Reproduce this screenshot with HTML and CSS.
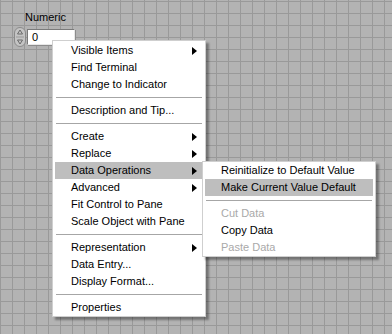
FILE: index.html
```html
<!DOCTYPE html>
<html lang="en">
<head>
    <meta charset="UTF-8">
    <title>Numeric - Data Operations</title>
    <link rel="stylesheet" href="styles.css">
</head>
<body>
    <div class="canvas">
        <!-- Numeric control on the front panel -->
        <div class="numeric">
            <div class="label">Numeric</div>
            <div class="control">
                <svg class="spin" width="12" height="20" viewBox="0 0 12 20">
                    <rect x="0.5" y="0.5" width="11" height="19" rx="5.5" fill="#c4c4c4" stroke="#8a8a8a"/>
                    <line x1="2" y1="10" x2="10" y2="10" stroke="#9a9a9a"/>
                    <path d="M6 3 L8.5 7 L3.5 7 Z" fill="none" stroke="#6a6a6a"/>
                    <path d="M6 17 L8.5 13 L3.5 13 Z" fill="none" stroke="#6a6a6a"/>
                </svg>
                <div class="display">0</div>
            </div>
        </div>

        <!-- Shortcut menu -->
        <ul class="menu main-menu">
            <li class="item">Visible Items<span class="arrow"></span></li>
            <li class="item">Find Terminal</li>
            <li class="item">Change to Indicator</li>
            <li class="sep"></li>
            <li class="item">Description and Tip...</li>
            <li class="sep"></li>
            <li class="item">Create<span class="arrow"></span></li>
            <li class="item">Replace<span class="arrow"></span></li>
            <li class="item active">Data Operations<span class="arrow"></span></li>
            <li class="item">Advanced<span class="arrow"></span></li>
            <li class="item">Fit Control to Pane</li>
            <li class="item">Scale Object with Pane</li>
            <li class="sep"></li>
            <li class="item">Representation<span class="arrow"></span></li>
            <li class="item">Data Entry...</li>
            <li class="item">Display Format...</li>
            <li class="sep"></li>
            <li class="item">Properties</li>
        </ul>

        <!-- Submenu Data Operations -->
        <ul class="menu sub-menu">
            <li class="item">Reinitialize to Default Value</li>
            <li class="item active">Make Current Value Default</li>
            <li class="sep"></li>
            <li class="item disabled">Cut Data</li>
            <li class="item">Copy Data</li>
            <li class="item disabled">Paste Data</li>
        </ul>
    </div>
</body>
</html>
```

FILE: styles.css
```css
* {
    margin: 0;
    padding: 0;
    box-sizing: border-box;
}

body, html {
    width: 100%;
    height: 100%;
    font-family: "Liberation Sans", Arial, sans-serif;
    font-size: 11px;
    color: #000;
}

/* Grid panel */
.canvas {
    position: relative;
    width: 392px;
    height: 334px;
    overflow: hidden;
    background-color: #b3b3b3;
    background-image:
        linear-gradient(to right, #999999 1px, transparent 1px),
        linear-gradient(to bottom, #999999 1px, transparent 1px);
    background-size: 12px 12px;
    background-position: 0 0, 0 1px;
}

/* Numeric control */
.numeric {
    position: absolute;
    left: 14px;
    top: 10px;
}

.label {
    margin-left: 11px;
    line-height: 14px;
    height: 17px;
}

.control {
    display: flex;
    align-items: center;
}

.spin {
    display: block;
    margin-right: 1px;
}

.display {
    width: 48px;
    height: 16px;
    line-height: 14px;
    padding-left: 4px;
    background: #fff;
    border: 1px solid;
    border-color: #7a7a7a #e8e8e8 #e8e8e8 #7a7a7a;
    box-shadow: 1px 1px 0 #8c8c8c;
}

/* Menus */
.menu {
    position: absolute;
    list-style: none;
    background: #fff;
    border: 1px solid #cfcfcf;
    box-shadow: 3px 3px 2px rgba(0, 0, 0, 0.35);
}

.main-menu {
    left: 52px;
    top: 40px;
    width: 154px;
    padding-top: 1px;
}

.sub-menu {
    left: 202px;
    top: 161px;
    width: 174px;
}

.item {
    display: flex;
    justify-content: space-between;
    align-items: center;
    height: 17px;
    line-height: 17px;
    margin: 0 2px;
    padding: 0 6px 0 16px;
    white-space: nowrap;
}

.item.active {
    background: #bebebe;
}

.item.disabled {
    color: #a9a9a9;
}

.arrow {
    width: 0;
    height: 0;
    border-left: 5px solid #000;
    border-top: 4px solid transparent;
    border-bottom: 4px solid transparent;
}

.sep {
    height: 1px;
    margin: 4px 3px;
    background: #a6a6a6;
}
```
